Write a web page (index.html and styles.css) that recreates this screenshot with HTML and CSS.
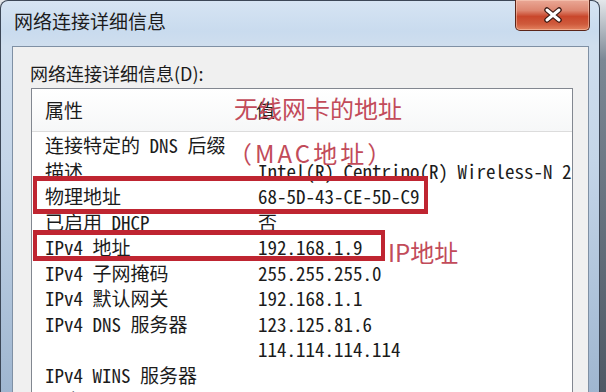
FILE: index.html
```html
<html>
    <head>
        <link rel="stylesheet" href="styles.css">
        <title>网络连接详细信息</title>
    </head>
    <body>

<div class="window"> <!-- dialog frame -->
    <div class="titlebar">
        <span class="title">网络连接详细信息</span>
        <div class="close">
            <svg width="22" height="16" viewBox="0 0 22 16">
                <path d="M5 3 L17 13 M17 3 L5 13" stroke="#3b1a14" stroke-width="5.5" stroke-linecap="round"/>
                <path d="M5 3 L17 13 M17 3 L5 13" stroke="#ffffff" stroke-width="3" stroke-linecap="round"/>
            </svg>
        </div>
    </div>

    <div class="client">
        <div class="caption">网络连接详细信息(D):</div>

        <div class="listbox">
            <div class="list-head">
                <span>属性</span>
                <span>值</span>
            </div>
            <div class="list-row"><span>连接特定的 DNS 后缀</span><span></span></div>
            <div class="list-row"><span>描述</span><span>Intel(R) Centrino(R) Wireless-N 2230</span></div>
            <div class="list-row"><span>物理地址</span><span>68-5D-43-CE-5D-C9</span></div>
            <div class="list-row"><span>已启用 DHCP</span><span>否</span></div>
            <div class="list-row"><span>IPv4 地址</span><span>192.168.1.9</span></div>
            <div class="list-row"><span>IPv4 子网掩码</span><span>255.255.255.0</span></div>
            <div class="list-row"><span>IPv4 默认网关</span><span>192.168.1.1</span></div>
            <div class="list-row"><span>IPv4 DNS 服务器</span><span>123.125.81.6</span></div>
            <div class="list-row"><span></span><span>114.114.114.114</span></div>
            <div class="list-row"><span>IPv4 WINS 服务器</span><span></span></div>
            <div class="list-row"><span>已启用 NetBIOS over Tcpip</span><span>是</span></div>
        </div>
    </div>
</div>

<!-- red annotations drawn over the screenshot -->
<div class="marks">
    <div class="mark-box mark-mac"></div>
    <div class="mark-box mark-ip"></div>
    <div class="note note-wifi">无线网卡的地址</div>
    <div class="note note-mac">（MAC地址）</div>
    <div class="note note-ip">IP地址</div>
</div>

    </body>
</html>
```

FILE: styles.css
```css
* {
    box-sizing: border-box;
}

body {
    margin: 0;
    width: 606px;
    height: 392px;
    overflow: hidden;
    background: linear-gradient(to bottom, #e4e7ea 0, #7b8794 60px, #4f5965 392px);
    font-family: "Noto Sans CJK SC", sans-serif;
    color: #1b1b1b;
}

.window {
    width: 600px;
    height: 420px;
    border: 1px solid #3c4757;
    border-bottom: none;
    border-radius: 8px 8px 0 0;
    padding: 0 10px 0 11px;
    background: linear-gradient(to bottom, #d6e4f3 0, #c9dbee 30px, #cfdeee 45px, #c4d5e8 160px, #9fb6d0 392px);
}

.titlebar {
    display: flex;
    justify-content: space-between;
    align-items: flex-start;
    height: 45px;
}

.title {
    padding: 8px 0 0 2px;
    font-size: 19px;
    line-height: 24px;
}

.close {
    display: flex;
    align-items: center;
    justify-content: center;
    width: 75px;
    height: 31px;
    margin: -1px -1px 0 0;
    border: 1px solid #5b2519;
    border-top: none;
    border-radius: 0 0 5px 5px;
    background: linear-gradient(to bottom, #eaa896 0, #dd8670 35%, #c9472c 55%, #cf5a3c 80%, #e48461 100%);
    box-shadow: inset 0 0 0 1px rgba(255, 220, 200, 0.45);
}

.client {
    height: 360px;
    border: 1px solid #7f90a4;
    border-bottom: none;
    background: #f0f0f0;
    padding: 14px 15px 0 18px;
}

.caption {
    margin-left: -1px;
    font-size: 18px;
    line-height: 24px;
}

.listbox {
    margin-top: 3px;
    height: 320px;
    border: 1px solid #828790;
    background: #ffffff;
    overflow: hidden;
}

.list-head {
    display: grid;
    grid-template-columns: 211px 1fr;
    height: 43px;
    padding-left: 13px;
    border-bottom: 1px solid #dcdcdc;
    background: linear-gradient(to bottom, #ffffff, #f6f7f8);
    font-size: 19px;
    line-height: 41px;
}

.list-row {
    display: grid;
    grid-template-columns: 213px 1fr;
    height: 25.5px;
    padding-left: 13px;
    font-family: "Noto Sans Mono CJK SC", "Liberation Mono", "Noto Sans CJK SC", monospace;
    font-size: 19px;
    line-height: 25.5px;
    white-space: nowrap;
}

.list-row span {
    overflow: hidden;
}

/* annotations */
.marks {
    position: absolute;
    left: 0;
    top: 0;
    width: 606px;
    height: 392px;
    pointer-events: none;
}

.mark-box {
    position: absolute;
    border: 5px solid #bf2531;
    border-left-width: 4px;
    border-right-width: 4px;
}

.mark-mac {
    left: 33px;
    top: 176px;
    width: 395px;
    height: 38px;
}

.mark-ip {
    left: 33px;
    top: 230px;
    width: 352px;
    height: 31px;
}

.note {
    position: absolute;
    font-size: 24px;
    line-height: 24px;
    color: #c24b5a;
    white-space: nowrap;
}

.note-wifi { left: 234px; top: 96px; }
.note-mac { left: 228px; top: 141px; letter-spacing: 3px; }
.note-ip { left: 388px; top: 240px; }
```
